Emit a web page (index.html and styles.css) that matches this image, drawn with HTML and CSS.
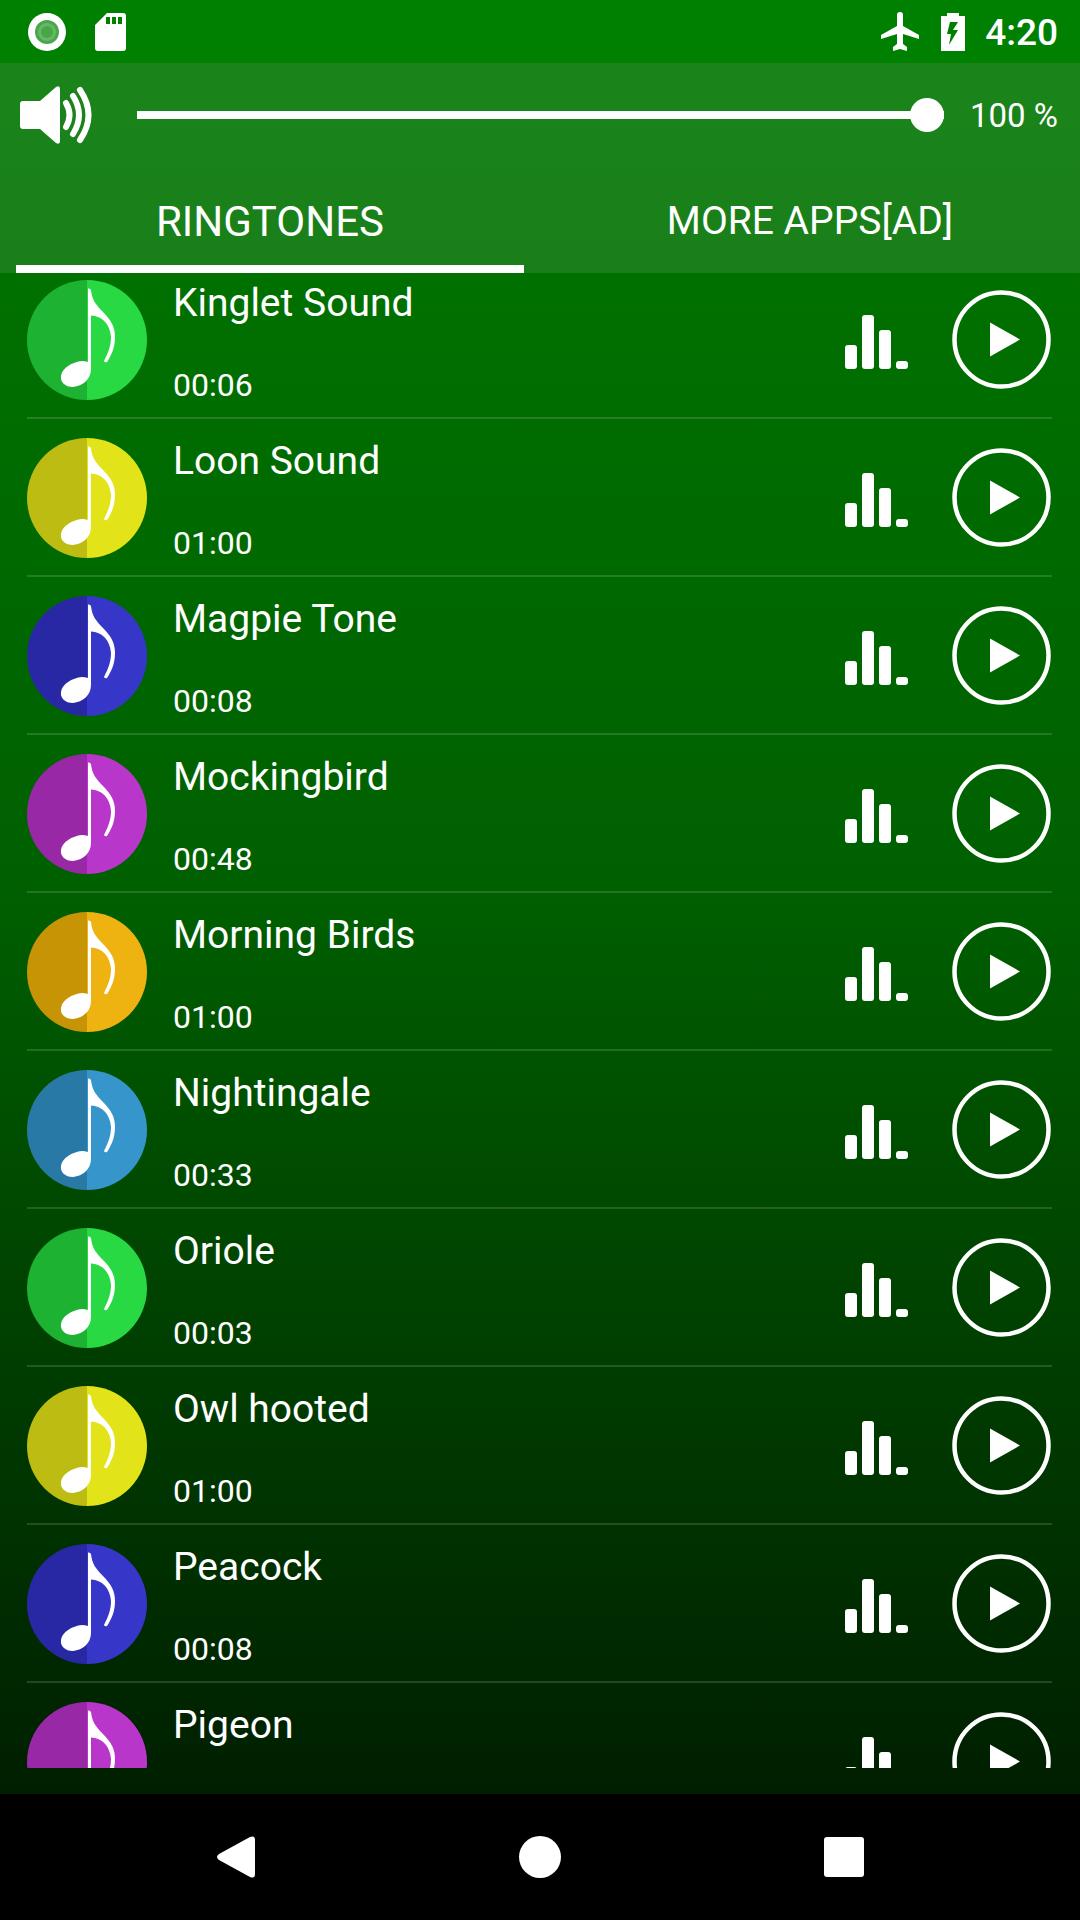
FILE: index.html
```html
<!DOCTYPE html>
<html lang="en">
<head>
<meta charset="utf-8">
<meta name="viewport" content="width=device-width, initial-scale=1">
<title>Ringtones</title>
<link rel="stylesheet" href="styles.css">
</head>
<body>
<svg class="sprite" aria-hidden="true">
  <symbol id="note" viewBox="0 0 120 120">
    <path fill="#fff" d="M61 8.500Q63 8 64 10C65 20 69 25 76 32C84 40 88 47 88 57C88 68 84 76 80 82Q78 83 77 81C81 73 84 66 84 57C83 44 75 36 64 35.500V89C64 99 56 106 46 107C38 107 33 102 34 96C35 88 45 82 55 81Q58 81 61 82Z"/>
  </symbol>
  <symbol id="bars" viewBox="0 0 64 54">
    <g fill="#fff"><rect y="30" width="12" height="24" rx="3"/><rect x="17" width="12" height="54" rx="3"/><rect x="34" y="15" width="12" height="39" rx="3"/><rect x="51" y="46" width="12" height="8" rx="3"/></g>
  </symbol>
  <symbol id="play" viewBox="0 0 100 100">
    <circle cx="49.500" cy="49.500" r="47" fill="none" stroke="#fff" stroke-width="4.500"/>
    <path fill="#fff" d="M38 32.500L68 49.500L38 66.500z"/>
  </symbol>
</svg>
<div class="screen">
  <div class="status">
    <svg width="38" height="38" viewBox="0 0 38 38"><circle cx="19" cy="19" r="19" fill="#fff"/><circle cx="19" cy="19" r="12" fill="#4ca64c"/><circle cx="19" cy="19" r="9" fill="#66b866"/><circle cx="19" cy="19" r="6" fill="#48a548"/></svg>
    <svg class="sd" width="31" height="38" viewBox="0 0 31 38"><path fill="#fff" fill-rule="evenodd" d="M12 0H28Q31 0 31 3V35Q31 38 28 38H3Q0 38 0 35V12ZM11 4V11H15V4ZM17 4V11H21V4ZM23 4V11H27V4Z"/></svg>
    <span class="spacer"></span>
    <svg width="38" height="39" viewBox="0 0 38 39"><path fill="#fff" d="M16 3q0-3 3-3t3 3v11l16 9v4l-16-5v10l4 3v4l-7-2l-7 2v-4l4-3V22L0 27v-4l16-9z"/></svg>
    <svg class="battery" width="24" height="38" viewBox="0 0 24 38"><path fill="#fff" fill-rule="evenodd" d="M6 0H18V3H24V38H0V3H6ZM9 9L6 21H10L8 32L17 17H12L17 9Z"/></svg>
    <time class="clock">4:20</time>
  </div>
  <header class="header">
    <div class="volume">
      <svg width="72" height="58" viewBox="0 0 72 58"><path fill="#fff" d="M3 15H20L36 1Q40-1 40 3V55Q40 59 36 57L20 43H3Q0 43 0 40V18Q0 15 3 15Z"/><g fill="none" stroke="#fff" stroke-width="6" stroke-linecap="round"><path d="M46 17Q53 29 46 41M53 10Q65 29 53 48M60 4Q77 29 60 54"/></g></svg>
      <input class="slider" type="range" min="0" max="100" value="100" aria-label="Volume">
      <output class="percent">100 %</output>
    </div>
    <nav class="tabs">
      <button class="tab active" type="button">RINGTONES</button>
      <button class="tab" type="button">MORE APPS[AD]</button>
    </nav>
  </header>
  <main class="viewport">
    <ul class="list">
      <li class="row"><svg class="disc green"><use href="#note"/></svg><div class="info"><span class="name">Kinglet Sound</span><span class="time">00:06</span></div><svg class="bars"><use href="#bars"/></svg><button class="play" type="button" aria-label="Play Kinglet Sound"><svg><use href="#play"/></svg></button></li>
      <li class="row"><svg class="disc yellow"><use href="#note"/></svg><div class="info"><span class="name">Loon Sound</span><span class="time">01:00</span></div><svg class="bars"><use href="#bars"/></svg><button class="play" type="button" aria-label="Play Loon Sound"><svg><use href="#play"/></svg></button></li>
      <li class="row"><svg class="disc blue"><use href="#note"/></svg><div class="info"><span class="name">Magpie Tone</span><span class="time">00:08</span></div><svg class="bars"><use href="#bars"/></svg><button class="play" type="button" aria-label="Play Magpie Tone"><svg><use href="#play"/></svg></button></li>
      <li class="row"><svg class="disc purple"><use href="#note"/></svg><div class="info"><span class="name">Mockingbird</span><span class="time">00:48</span></div><svg class="bars"><use href="#bars"/></svg><button class="play" type="button" aria-label="Play Mockingbird"><svg><use href="#play"/></svg></button></li>
      <li class="row"><svg class="disc orange"><use href="#note"/></svg><div class="info"><span class="name">Morning Birds</span><span class="time">01:00</span></div><svg class="bars"><use href="#bars"/></svg><button class="play" type="button" aria-label="Play Morning Birds"><svg><use href="#play"/></svg></button></li>
      <li class="row"><svg class="disc sky"><use href="#note"/></svg><div class="info"><span class="name">Nightingale</span><span class="time">00:33</span></div><svg class="bars"><use href="#bars"/></svg><button class="play" type="button" aria-label="Play Nightingale"><svg><use href="#play"/></svg></button></li>
      <li class="row"><svg class="disc green"><use href="#note"/></svg><div class="info"><span class="name">Oriole</span><span class="time">00:03</span></div><svg class="bars"><use href="#bars"/></svg><button class="play" type="button" aria-label="Play Oriole"><svg><use href="#play"/></svg></button></li>
      <li class="row"><svg class="disc yellow"><use href="#note"/></svg><div class="info"><span class="name">Owl hooted</span><span class="time">01:00</span></div><svg class="bars"><use href="#bars"/></svg><button class="play" type="button" aria-label="Play Owl hooted"><svg><use href="#play"/></svg></button></li>
      <li class="row"><svg class="disc blue"><use href="#note"/></svg><div class="info"><span class="name">Peacock</span><span class="time">00:08</span></div><svg class="bars"><use href="#bars"/></svg><button class="play" type="button" aria-label="Play Peacock"><svg><use href="#play"/></svg></button></li>
      <li class="row"><svg class="disc purple"><use href="#note"/></svg><div class="info"><span class="name">Pigeon</span></div><svg class="bars"><use href="#bars"/></svg><button class="play" type="button" aria-label="Play Pigeon"><svg><use href="#play"/></svg></button></li>
    </ul>
  </main>
  <nav class="system" aria-label="System">
    <button type="button" aria-label="Back"><svg width="38" height="42" viewBox="0 0 38 42"><path fill="#fff" d="M2 18L33 1Q38-1 38 4V38Q38 43 33 41L2 24Q-2 21 2 18Z"/></svg></button>
    <button type="button" aria-label="Home"><svg width="42" height="42" viewBox="0 0 42 42"><circle cx="21" cy="21" r="21" fill="#fff"/></svg></button>
    <button type="button" aria-label="Recent apps"><svg width="40" height="40" viewBox="0 0 40 40"><rect width="40" height="40" rx="3" fill="#fff"/></svg></button>
  </nav>
</div>
</body>
</html>
```
FILE: styles.css
```css
* {
  box-sizing: border-box;
}

body {
  margin: 0;
  font-family: Roboto, sans-serif;
  color: #fff;
  background: #000;
}

button {
  padding: 0;
  border: 0;
  background: none;
  color: inherit;
  font: inherit;
}

svg {
  display: block;
  flex: none;
}

.sprite {
  position: absolute;
  width: 0;
  height: 0;
}

.screen {
  display: flex;
  flex-direction: column;
  height: 100vh;
  background: linear-gradient(#007800, #006000 46%, #001e00 94%);
}

.status {
  display: flex;
  flex: none;
  align-items: center;
  height: 63px;
  padding: 0 22px 0 28px;
  background: #008000;
}

.sd {
  margin-left: 29px;
}

.spacer {
  flex: 1;
}

.battery {
  margin: 0 20px 0 22px;
}

.clock {
  padding-top: 2px;
  font-size: 37px;
  font-weight: 500;
  line-height: 40px;
}

.header {
  flex: none;
  background: rgba(255, 255, 255, 0.1);
}

.volume {
  display: flex;
  align-items: center;
  height: 104px;
  padding: 0 22px 0 20px;
}

.slider {
  flex: 1;
  min-width: 0;
  height: 34px;
  margin: 0 26px 0 45px;
  appearance: none;
  background: linear-gradient(#fff, #fff) center / 100% 8px no-repeat;
  border-radius: 4px;
}

.slider::-webkit-slider-thumb {
  appearance: none;
  width: 34px;
  height: 34px;
  border-radius: 50%;
  background: #fff;
}

.percent {
  padding-top: 2px;
  font-size: 33px;
  line-height: 40px;
}

.tabs {
  display: grid;
  grid-template-columns: 1fr 1fr;
  height: 106px;
}

.tab {
  margin: 0 16px;
  padding-top: 10px;
  border-bottom: 8px solid transparent;
  font-size: 39px;
}

.tab.active {
  border-color: #fff;
  font-size: 42px;
}

.viewport {
  flex: 1;
  min-height: 0;
  margin-bottom: 26px;
  overflow: hidden;
}

.list {
  margin: -12px 28px 0 27px;
  padding: 0;
  list-style: none;
}

.row {
  display: flex;
  align-items: center;
  height: 158px;
  padding-top: 1px;
  border-bottom: 2px solid rgba(255, 255, 255, 0.14);
}

.disc {
  width: 120px;
  height: 120px;
  border-radius: 50%;
}

.green {
  background: linear-gradient(90deg, #1eb232 50%, #29d944 50%);
}

.yellow {
  background: linear-gradient(90deg, #bcbc12 50%, #e3e31a 50%);
}

.blue {
  background: linear-gradient(90deg, #2828a4 50%, #3636c8 50%);
}

.purple {
  background: linear-gradient(90deg, #9828a6 50%, #b936ca 50%);
}

.orange {
  background: linear-gradient(90deg, #c79406 50%, #eeb310 50%);
}

.sky {
  background: linear-gradient(90deg, #2879a6 50%, #3695ca 50%);
}

.info {
  display: flex;
  flex: 1;
  flex-direction: column;
  align-self: stretch;
  gap: 40px;
  padding: 18px 0 0 26px;
}

.name {
  font-size: 39px;
  line-height: 46px;
}

.time {
  font-size: 32px;
  line-height: 38px;
}

.bars {
  width: 64px;
  height: 54px;
  margin: 4px 43px 0 0;
}

.play,
.play svg {
  width: 100px;
  height: 100px;
}

.system {
  display: flex;
  flex: none;
  justify-content: center;
  height: 126px;
  background: #000;
}

.system button {
  display: flex;
  align-items: center;
  justify-content: center;
  width: 304px;
}
```
